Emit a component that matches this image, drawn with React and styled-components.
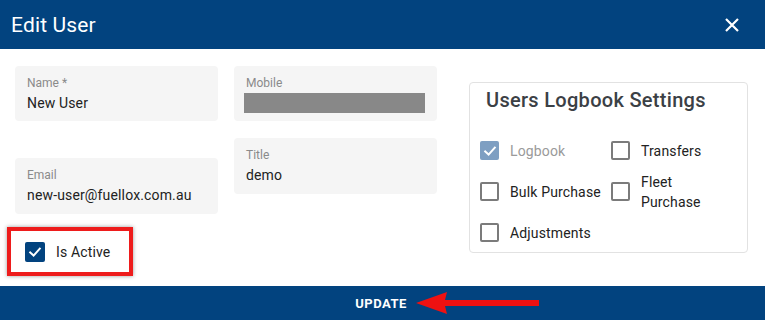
import React from "react";
import styled, { createGlobalStyle } from "styled-components";

const NAVY = "#02437f";

const Global = createGlobalStyle`
  html, body { margin: 0; padding: 0; background: #fff; }
  body { font-family: Roboto, "Liberation Sans", Arial, sans-serif; width: 765px; height: 320px; overflow: hidden; }
  * { box-sizing: border-box; }
`;

const Dialog = styled.div`
  width: 765px;
  height: 320px;
  display: flex;
  flex-direction: column;
  background: #fff;
`;

const Header = styled.div`
  height: 49px;
  flex: none;
  background: ${NAVY};
  display: flex;
  align-items: center;
  justify-content: space-between;
  padding: 0 25px 0 11px;
  color: #fff;
`;

const Title = styled.h1`
  margin: 0;
  font-size: 21px;
  font-weight: 400;
  letter-spacing: 0.15px;
`;

const CloseBtn = styled.button`
  background: none;
  border: 0;
  padding: 0;
  width: 16px;
  height: 16px;
  display: flex;
  cursor: pointer;
`;

const Body = styled.div`
  flex: 1;
  display: flex;
  align-items: flex-start;
  padding: 17px 0 0 15px;
`;

const FieldsArea = styled.div`
  display: grid;
  grid-template-columns: 203px 203px;
  column-gap: 16px;
  align-items: start;
`;

const Column = styled.div`
  display: flex;
  flex-direction: column;
  gap: ${(p) => p.$gap}px;
`;

const Field = styled.div`
  background: #f5f5f5;
  border-radius: 4px;
  height: ${(p) => p.$h || 55}px;
  padding: 9px 12px 0;
`;

const Label = styled.div`
  font-size: 12px;
  line-height: 16px;
  color: #8a8a8a;
`;

const Value = styled.div`
  margin-top: 2px;
  font-size: 14px;
  line-height: 20px;
  color: #222;
  letter-spacing: 0.15px;
`;

const Redacted = styled.div`
  margin: 2px 0 0 -2px;
  width: 181px;
  height: 20px;
  background: #888;
`;

const Highlight = styled.div`
  margin: 13px 0 0 -8px;
  width: 126px;
  height: 49px;
  border: 4px solid #ee1c1c;
  box-shadow: 0 0 4px rgba(0, 0, 0, 0.4);
  display: flex;
  align-items: center;
  padding-left: 14px;
  gap: 11px;
`;

const Box = styled.span`
  width: ${(p) => p.$size || 19}px;
  height: ${(p) => p.$size || 19}px;
  flex: none;
  border-radius: 2px;
  display: flex;
  align-items: center;
  justify-content: center;
  background: ${(p) => (p.$checked ? p.$fill : "transparent")};
  border: ${(p) => (p.$checked ? "none" : "2px solid #7b7b7b")};
`;

const CheckText = styled.span`
  font-size: 14px;
  line-height: 20px;
  color: ${(p) => (p.$disabled ? "#9a9a9a" : "#222")};
  letter-spacing: 0.15px;
`;

const Card = styled.div`
  margin: 16px 0 0 32px;
  width: 279px;
  height: 171px;
  border: 1px solid #e2e2e2;
  border-radius: 4px;
  padding: 5px 18px 0 10px;
  display: flex;
  flex-direction: column;
`;

const CardTitle = styled.h2`
  margin: 0 0 18px 6px;
  font-size: 20px;
  line-height: 24px;
  font-weight: 500;
  color: #3b4045;
  letter-spacing: 0.3px;
`;

const CheckGrid = styled.div`
  display: grid;
  grid-template-columns: 131px 1fr;
  grid-auto-rows: 41px;
  align-items: center;
`;

const CheckItem = styled.label`
  display: flex;
  align-items: center;
  gap: 11px;
`;

const Footer = styled.div`
  position: relative;
  height: 34px;
  flex: none;
  background: ${NAVY};
  display: flex;
  align-items: center;
  justify-content: center;
`;

const UpdateBtn = styled.button`
  background: none;
  border: 0;
  color: #fff;
  font-family: inherit;
  font-size: 13px;
  font-weight: 700;
  letter-spacing: 0.5px;
  padding: 0;
  margin-left: -3px;
  cursor: pointer;
`;

const Arrow = styled.svg`
  position: absolute;
  left: 416px;
  top: 5px;
`;

const Tick = ({ color = "#fff" }) => (
  <svg width="14" height="14" viewBox="0 0 14 14">
    <path d="M2.2 7.4 L5.6 10.6 L11.8 3.6" fill="none" stroke={color} strokeWidth="2" strokeLinecap="square" />
  </svg>
);

const Check = ({ label, checked, disabled }) => (
  <CheckItem>
    <Box $checked={checked} $fill={disabled ? "#7e9fc2" : NAVY}>
      {checked && <Tick />}
    </Box>
    <CheckText $disabled={disabled}>{label}</CheckText>
  </CheckItem>
);

export default function App() {
  return (
    <>
      <Global />
      <Dialog>
        <Header>
          <Title>Edit User</Title>
          <CloseBtn aria-label="close">
            <svg width="16" height="16" viewBox="0 0 16 16">
              <path d="M2 2 L14 14 M14 2 L2 14" stroke="#fff" strokeWidth="2.2" />
            </svg>
          </CloseBtn>
        </Header>
        <Body>
          <div>
            <FieldsArea>
              <Column $gap={37}>
                <Field>
                  <Label>Name *</Label>
                  <Value>New User</Value>
                </Field>
                <Field $h={56}>
                  <Label>Email</Label>
                  <Value>new-user@fuellox.com.au</Value>
                </Field>
              </Column>
              <Column $gap={17}>
                <Field>
                  <Label>Mobile</Label>
                  <Redacted />
                </Field>
                <Field $h={56}>
                  <Label>Title</Label>
                  <Value>demo</Value>
                </Field>
              </Column>
            </FieldsArea>
            <Highlight>
              <Box $checked $fill={NAVY} $size={20}>
                <Tick />
              </Box>
              <CheckText>Is Active</CheckText>
            </Highlight>
          </div>
          <Card>
            <CardTitle>Users Logbook Settings</CardTitle>
            <CheckGrid>
              <Check label="Logbook" checked disabled />
              <Check label="Transfers" />
              <Check label="Bulk Purchase" />
              <Check label="Fleet Purchase" />
              <Check label="Adjustments" />
            </CheckGrid>
          </Card>
        </Body>
        <Footer>
          <UpdateBtn>UPDATE</UpdateBtn>
          <Arrow width="126" height="24" viewBox="0 0 126 24">
            <path d="M0 12 L31 1 L29 9 L123 9 L123 15 L29 15 L31 23 Z" fill="#ee1111" />
          </Arrow>
        </Footer>
      </Dialog>
    </>
  );
}
